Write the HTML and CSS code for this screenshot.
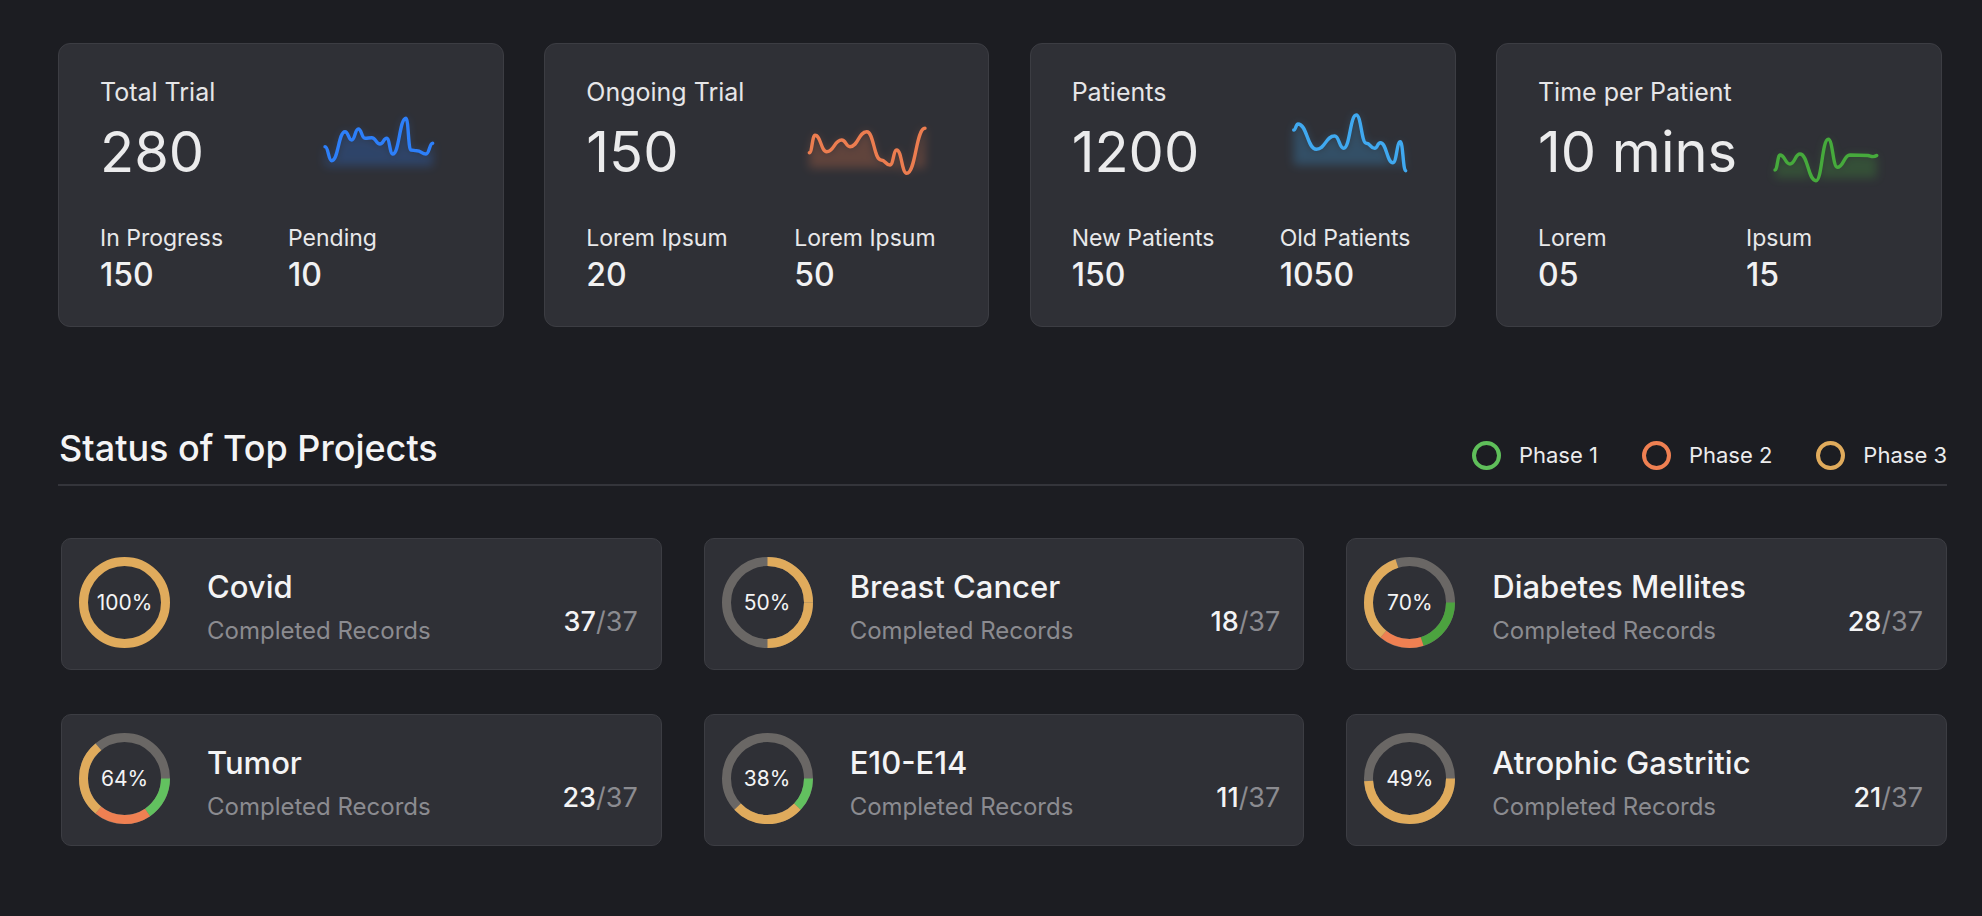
FILE: index.html
```html
<!DOCTYPE html>
<html lang="en">
<head>
<meta charset="utf-8">
<title>Dashboard</title>
<link rel="stylesheet" href="styles.css">
</head>
<body>
<main class="dash">
  <section class="stats">
    <article class="stat stat--trial">
      <div class="stat-top">
        <div class="stat-head">
          <h3 class="stat-title">Total Trial</h3>
          <div class="stat-value">280</div>
        </div>
        <svg class="spark" width="130" height="82" viewBox="0 0 130 82">
          <defs><filter id="glow1" x="-30%" y="-40%" width="160%" height="200%"><feGaussianBlur stdDeviation="5"/></filter></defs>
          <path class="spark-area" fill="#2d7ff9" filter="url(#glow1)" d="M5 38.7C8.4 38.7 8.4 52.7 11.7 52.7C18.4 52.7 18.4 23.7 25 23.7C28.4 23.7 28.4 32 31.7 32C35 32 35 21 38.3 21C41.7 21 41.7 30.3 45 30.3C48.4 30.3 48.4 29.7 51.7 29.7C55.9 29.7 55.9 36 60 36C63.4 36 63.4 30.3 66.7 30.3C69.7 30.3 69.7 46 72.7 46C79.4 46 79.4 10.3 86 10.3C88.4 10.3 88.4 42 90.7 42C93.7 42 93.7 42.7 96.7 42.7C101.4 42.7 101.4 46 106 46C109.4 46 109.4 35.3 112.7 35.3V58H5Z"/>
          <path class="spark-line" stroke="#2d7ff9" d="M5 38.7C8.4 38.7 8.4 52.7 11.7 52.7C18.4 52.7 18.4 23.7 25 23.7C28.4 23.7 28.4 32 31.7 32C35 32 35 21 38.3 21C41.7 21 41.7 30.3 45 30.3C48.4 30.3 48.4 29.7 51.7 29.7C55.9 29.7 55.9 36 60 36C63.4 36 63.4 30.3 66.7 30.3C69.7 30.3 69.7 46 72.7 46C79.4 46 79.4 10.3 86 10.3C88.4 10.3 88.4 42 90.7 42C93.7 42 93.7 42.7 96.7 42.7C101.4 42.7 101.4 46 106 46C109.4 46 109.4 35.3 112.7 35.3"/>
        </svg>
      </div>
      <div class="stat-sub">
        <div class="sub"><div class="sub-label">In Progress</div><div class="sub-value">150</div></div>
        <div class="sub"><div class="sub-label">Pending</div><div class="sub-value">10</div></div>
      </div>
    </article>

    <article class="stat">
      <div class="stat-top">
        <div class="stat-head">
          <h3 class="stat-title">Ongoing Trial</h3>
          <div class="stat-value">150</div>
        </div>
        <svg class="spark" width="130" height="82" viewBox="0 0 130 82">
          <defs><filter id="glow2" x="-30%" y="-40%" width="160%" height="200%"><feGaussianBlur stdDeviation="5"/></filter></defs>
          <path class="spark-area" fill="#ec7d50" filter="url(#glow2)" d="M3.3 44.7C6.2 44.7 6.2 27.3 9 27.3C14.9 27.3 14.9 43.7 20.7 43.7C28.2 43.7 28.2 32 35.7 32C39.9 32 39.9 38.7 44 38.7C52.4 38.7 52.4 23.7 60.7 23.7C67.9 23.7 67.9 52 75 52C79.5 52 79.5 57 84 57C87.4 57 87.4 42 90.7 42C95.7 42 95.7 65.3 100.7 65.3C109.9 65.3 109.9 20.3 119 20.3V60H3.3Z"/>
          <path class="spark-line" stroke="#ec7d50" d="M3.3 44.7C6.2 44.7 6.2 27.3 9 27.3C14.9 27.3 14.9 43.7 20.7 43.7C28.2 43.7 28.2 32 35.7 32C39.9 32 39.9 38.7 44 38.7C52.4 38.7 52.4 23.7 60.7 23.7C67.9 23.7 67.9 52 75 52C79.5 52 79.5 57 84 57C87.4 57 87.4 42 90.7 42C95.7 42 95.7 65.3 100.7 65.3C109.9 65.3 109.9 20.3 119 20.3"/>
        </svg>
      </div>
      <div class="stat-sub">
        <div class="sub"><div class="sub-label">Lorem Ipsum</div><div class="sub-value">20</div></div>
        <div class="sub"><div class="sub-label">Lorem Ipsum</div><div class="sub-value">50</div></div>
      </div>
    </article>

    <article class="stat">
      <div class="stat-top">
        <div class="stat-head">
          <h3 class="stat-title">Patients</h3>
          <div class="stat-value">1200</div>
        </div>
        <svg class="spark" width="130" height="82" viewBox="0 0 130 82">
          <defs><filter id="glow3" x="-30%" y="-40%" width="160%" height="200%"><feGaussianBlur stdDeviation="5"/></filter></defs>
          <path class="spark-area" fill="#40a9f0" filter="url(#glow3)" d="M1.7 22C3.9 22 3.9 16 6 16C15.2 16 15.2 41.3 24.3 41.3C33.5 41.3 33.5 28 42.7 28C47.2 28 47.2 40.3 51.7 40.3C58 40.3 58 7 64.3 7C69.3 7 69.3 35.3 74.3 35.3C78.5 35.3 78.5 40.3 82.7 40.3C85.5 40.3 85.5 34.7 88.3 34.7C94.7 34.7 94.7 54.7 101 54.7C104.7 54.7 104.7 33.7 108.3 33.7C111 33.7 111 62.7 113.7 62.7V57H1.7Z"/>
          <path class="spark-line" stroke="#40a9f0" d="M1.7 22C3.9 22 3.9 16 6 16C15.2 16 15.2 41.3 24.3 41.3C33.5 41.3 33.5 28 42.7 28C47.2 28 47.2 40.3 51.7 40.3C58 40.3 58 7 64.3 7C69.3 7 69.3 35.3 74.3 35.3C78.5 35.3 78.5 40.3 82.7 40.3C85.5 40.3 85.5 34.7 88.3 34.7C94.7 34.7 94.7 54.7 101 54.7C104.7 54.7 104.7 33.7 108.3 33.7C111 33.7 111 62.7 113.7 62.7"/>
        </svg>
      </div>
      <div class="stat-sub">
        <div class="sub"><div class="sub-label">New Patients</div><div class="sub-value">150</div></div>
        <div class="sub"><div class="sub-label">Old Patients</div><div class="sub-value">1050</div></div>
      </div>
    </article>

    <article class="stat">
      <div class="stat-top">
        <div class="stat-head">
          <h3 class="stat-title">Time per Patient</h3>
          <div class="stat-value">10 mins</div>
        </div>
        <svg class="spark" width="130" height="82" viewBox="0 0 130 82">
          <defs><filter id="glow4" x="-30%" y="-40%" width="160%" height="200%"><feGaussianBlur stdDeviation="5"/></filter></defs>
          <path class="spark-area" fill="#46aa3c" filter="url(#glow4)" d="M17 62C19.5 62 19.5 47 22 47C27 47 27 56 32 56C37 56 37 46 42 46C50 46 50 72.7 58 72.7C64 72.7 64 31.3 70.3 31.3C74.8 31.3 74.8 59.3 79.3 59.3C85.7 59.3 85.7 47 92 47L110 47.5C113 48 115 50 118.7 47.5V70H17Z"/>
          <path class="spark-line" stroke="#46aa3c" d="M17 62C19.5 62 19.5 47 22 47C27 47 27 56 32 56C37 56 37 46 42 46C50 46 50 72.7 58 72.7C64 72.7 64 31.3 70.3 31.3C74.8 31.3 74.8 59.3 79.3 59.3C85.7 59.3 85.7 47 92 47L110 47.5C113 48 115 50 118.7 47.5"/>
        </svg>
      </div>
      <div class="stat-sub">
        <div class="sub"><div class="sub-label">Lorem</div><div class="sub-value">05</div></div>
        <div class="sub"><div class="sub-label">Ipsum</div><div class="sub-value">15</div></div>
      </div>
    </article>
  </section>

  <section class="projects">
    <header class="projects-head">
      <h2 class="projects-title">Status of Top Projects</h2>
      <ul class="legend">
        <li class="legend-item"><span class="dot dot--p1"></span>Phase 1</li>
        <li class="legend-item"><span class="dot dot--p2"></span>Phase 2</li>
        <li class="legend-item"><span class="dot dot--p3"></span>Phase 3</li>
      </ul>
    </header>

    <div class="project-grid">
      <article class="project">
        <div class="ring">
          <svg viewBox="0 0 91 91"><circle class="seg gold" cx="45.5" cy="45.5" r="41"/></svg>
          <span class="ring-label">100%</span>
        </div>
        <div class="project-info"><div class="project-name">Covid</div><div class="project-sub">Completed Records</div></div>
        <div class="project-count">37<span>/37</span></div>
      </article>

      <article class="project">
        <div class="ring">
          <svg viewBox="0 0 91 91">
            <circle class="track" cx="45.5" cy="45.5" r="41"/>
            <circle class="seg gold" cx="45.5" cy="45.5" r="41" pathLength="100" stroke-dasharray="25 100" stroke-dashoffset="0"/>
            <circle class="seg gold" cx="45.5" cy="45.5" r="41" pathLength="100" stroke-dasharray="25 100" stroke-dashoffset="-75"/>
          </svg>
          <span class="ring-label">50%</span>
        </div>
        <div class="project-info"><div class="project-name">Breast Cancer</div><div class="project-sub">Completed Records</div></div>
        <div class="project-count">18<span>/37</span></div>
      </article>

      <article class="project">
        <div class="ring">
          <svg viewBox="0 0 91 91">
            <circle class="track" cx="45.5" cy="45.5" r="41"/>
            <circle class="seg green-dk" cx="45.5" cy="45.5" r="41" pathLength="100" stroke-dasharray="20 100" stroke-dashoffset="0"/>
            <circle class="seg orange" cx="45.5" cy="45.5" r="41" pathLength="100" stroke-dasharray="16 100" stroke-dashoffset="-20"/>
            <circle class="seg gold" cx="45.5" cy="45.5" r="41" pathLength="100" stroke-dasharray="34 100" stroke-dashoffset="-36"/>
          </svg>
          <span class="ring-label">70%</span>
        </div>
        <div class="project-info"><div class="project-name">Diabetes Mellites</div><div class="project-sub">Completed Records</div></div>
        <div class="project-count">28<span>/37</span></div>
      </article>

      <article class="project">
        <div class="ring">
          <svg viewBox="0 0 91 91">
            <circle class="track" cx="45.5" cy="45.5" r="41"/>
            <circle class="seg green" cx="45.5" cy="45.5" r="41" pathLength="100" stroke-dasharray="15.5 100" stroke-dashoffset="0"/>
            <circle class="seg orange" cx="45.5" cy="45.5" r="41" pathLength="100" stroke-dasharray="20.5 100" stroke-dashoffset="-15.5"/>
            <circle class="seg gold" cx="45.5" cy="45.5" r="41" pathLength="100" stroke-dasharray="28 100" stroke-dashoffset="-36"/>
          </svg>
          <span class="ring-label">64%</span>
        </div>
        <div class="project-info"><div class="project-name">Tumor</div><div class="project-sub">Completed Records</div></div>
        <div class="project-count">23<span>/37</span></div>
      </article>

      <article class="project">
        <div class="ring">
          <svg viewBox="0 0 91 91">
            <circle class="track" cx="45.5" cy="45.5" r="41"/>
            <circle class="seg green" cx="45.5" cy="45.5" r="41" pathLength="100" stroke-dasharray="12 100" stroke-dashoffset="0"/>
            <circle class="seg gold" cx="45.5" cy="45.5" r="41" pathLength="100" stroke-dasharray="26 100" stroke-dashoffset="-12"/>
          </svg>
          <span class="ring-label">38%</span>
        </div>
        <div class="project-info"><div class="project-name">E10-E14</div><div class="project-sub">Completed Records</div></div>
        <div class="project-count">11<span>/37</span></div>
      </article>

      <article class="project">
        <div class="ring">
          <svg viewBox="0 0 91 91">
            <circle class="track" cx="45.5" cy="45.5" r="41"/>
            <circle class="seg gold" cx="45.5" cy="45.5" r="41" pathLength="100" stroke-dasharray="49 100" stroke-dashoffset="0"/>
          </svg>
          <span class="ring-label">49%</span>
        </div>
        <div class="project-info"><div class="project-name">Atrophic Gastritic</div><div class="project-sub">Completed Records</div></div>
        <div class="project-count">21<span>/37</span></div>
      </article>
    </div>
  </section>
</main>
</body>
</html>
```

FILE: styles.css
```css
* {
  box-sizing: border-box;
  margin: 0;
  padding: 0;
}

html,
body {
  background: #1c1d22;
}

body {
  width: 1982px;
  height: 916px;
  overflow: hidden;
  font-family: "Inter", "Noto Sans", sans-serif;
  color: #ececed;
}

.dash {
  padding: 43px 35px 0 58px;
}

/* ---------- stat cards ---------- */
.stats {
  display: grid;
  grid-template-columns: 446px 445px 426px 446px;
  justify-content: space-between;
  width: 1884px;
}

.stat {
  height: 284px;
  padding: 33px 20px 0 41px;
  background: #2f3036;
  border: 1px solid #3c3d43;
  border-radius: 12px;
}

.stat-top {
  display: flex;
  height: 105px;
}

.stat-head {
  flex: 0 0 220px;
}

.stat-title {
  font-size: 25px;
  line-height: 30px;
  font-weight: 400;
  color: #e6e6e8;
}

.stat-value {
  margin-top: 15px;
  font-size: 56px;
  line-height: 60px;
  font-weight: 400;
  color: #ebebec;
  white-space: nowrap;
}

.spark {
  display: block;
  flex: none;
  margin-top: 31px;
  overflow: visible;
}

.spark-area {
  opacity: 0.26;
}

.spark-line {
  fill: none;
  stroke-width: 3.4;
  stroke-linecap: round;
  stroke-linejoin: round;
}

.stat-sub {
  display: grid;
  grid-template-columns: 208px auto;
  margin-top: 42px;
}

.stat--trial .stat-sub {
  grid-template-columns: 188px auto;
}

.sub-label {
  font-size: 23px;
  line-height: 28px;
  color: #e8e8ea;
}

.sub-value {
  margin-top: 5px;
  font-size: 32px;
  line-height: 36px;
  font-weight: 500;
  color: #f1f1f2;
}

/* ---------- projects ---------- */
.projects {
  width: 1889px;
  margin-top: 99px;
}

.projects-head {
  display: flex;
  justify-content: space-between;
  align-items: flex-end;
  padding: 0 0 14px 1px;
  border-bottom: 2px solid #34353b;
}

.projects-title {
  font-size: 36px;
  line-height: 44px;
  font-weight: 500;
  color: #f4f4f5;
}

.legend {
  display: flex;
  gap: 44px;
  list-style: none;
}

.legend-item {
  display: flex;
  align-items: center;
  gap: 18px;
  font-size: 22px;
  line-height: 30px;
  color: #ececed;
}

.dot {
  width: 29px;
  height: 29px;
  border-radius: 50%;
  border: 4px solid;
}

.dot--p1 { border-color: #5fbf5a; }
.dot--p2 { border-color: #ef8052; }
.dot--p3 { border-color: #e0ab5c; }

.project-grid {
  display: grid;
  grid-template-columns: repeat(3, 1fr);
  column-gap: 42px;
  row-gap: 44px;
  margin-top: 52px;
  padding-left: 3px;
}

.project {
  display: flex;
  align-items: center;
  height: 132px;
  padding: 0 23px 0 17px;
  background: #2f3036;
  border: 1px solid #3c3d43;
  border-radius: 10px;
}

.ring {
  display: grid;
  place-items: center;
  flex: none;
  width: 91px;
  height: 91px;
  margin-top: -3px;
}

.ring > * {
  grid-area: 1 / 1;
}

.ring svg {
  width: 91px;
  height: 91px;
}

.ring circle {
  fill: none;
  stroke-width: 9;
}

.track { stroke: #6a6765; }
.gold { stroke: #e0ab5c; }
.orange { stroke: #ef8052; }
.green { stroke: #62c15f; }
.green-dk { stroke: #4ca33f; }

.ring-label {
  font-size: 21px;
  color: #f4f4f5;
}

.project-info {
  flex: 1;
  margin: 4px 0 0 37px;
}

.project-name {
  font-size: 31px;
  line-height: 38px;
  font-weight: 500;
  color: #f4f4f5;
}

.project-sub {
  margin-top: 11px;
  font-size: 24px;
  line-height: 28px;
  color: #8b8b90;
}

.project-count {
  align-self: flex-end;
  margin-bottom: 31px;
  font-size: 27px;
  line-height: 32px;
  font-weight: 500;
  color: #f4f4f5;
}

.project-count span {
  color: #8b8b90;
  font-weight: 400;
}
```
